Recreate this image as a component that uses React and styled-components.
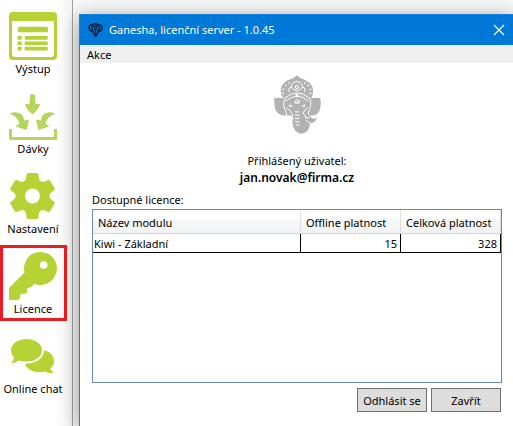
import React from "react";
import styled, { createGlobalStyle } from "styled-components";

const GREEN = "#b5d334";

const Global = createGlobalStyle`
  *, *::before, *::after { box-sizing: border-box; }
  body {
    margin: 0;
    overflow: hidden;
    background: #fff;
    color: #000;
    font-family: "Noto Sans", "Open Sans", sans-serif;
    font-size: 11px;
    line-height: 16px;
  }
  button { font: inherit; color: inherit; }
`;

const Page = styled.div`
  display: grid;
  grid-template-columns: 73px 1fr;
  min-height: 100vh;
`;

const Sidebar = styled.nav`
  display: flex;
  flex-direction: column;
  align-items: flex-start;
  gap: 4px;
  padding-top: 5px;
  border-right: 1px solid #a0a0a0;
  background: linear-gradient(90deg, #fff 75%, #f5f5f5);
`;

const NavButton = styled.button`
  display: flex;
  flex-direction: column;
  align-items: center;
  gap: 1px;
  width: 67px;
  height: 76px;
  padding: 4px 1px 0 0;
  border: 3px solid ${(p) => (p.$active ? "#ed1c24" : "transparent")};
  background: none;
  white-space: nowrap;

  svg { flex: none; display: block; }
`;

const Workspace = styled.main`
  display: flex;
  padding: 14px 0 0 6px;
  background: #f7f7f7;
`;

const Dialog = styled.section`
  flex: 1;
  display: flex;
  flex-direction: column;
  margin-right: -2px;
  border: 1px solid #1683d8;
  border-bottom: 0;
  background: #fff;
  box-shadow: 0 4px 18px rgba(0, 0, 0, 0.4);
`;

const TitleBar = styled.header`
  display: flex;
  align-items: center;
  gap: 6px;
  height: 30px;
  padding: 0 9px 0 8px;
  background: #0078d7;
  color: #fff;
`;

const Title = styled.h1`
  flex: 1;
  margin: 0;
  font-size: 11px;
  font-weight: 400;
  white-space: nowrap;
`;

const CloseButton = styled.button`
  display: flex;
  padding: 0;
  border: 0;
  background: none;
`;

const MenuBar = styled.div`
  display: flex;
  height: 18px;
  padding: 0 7px;
  background: #f0f0f0;
`;

const MenuItem = styled.button`
  padding: 0;
  border: 0;
  background: none;
  line-height: 20px;
`;

const Body = styled.div`
  flex: 1;
  display: flex;
  flex-direction: column;
  padding: 12px 12px 14px;
`;

const Account = styled.div`
  display: flex;
  flex-direction: column;
  align-items: center;

  svg { margin-bottom: 19px; }
`;

const Email = styled.strong`
  font-size: 12px;
  font-weight: 600;
  line-height: 18px;
`;

const ListLabel = styled.h2`
  margin: 5px 0 1px;
  font-size: 11px;
  font-weight: 400;
`;

const ListBox = styled.div`
  flex: 1;
  border: 1px solid #688caf;
`;

const Table = styled.table`
  width: 100%;
  table-layout: fixed;
  border-collapse: separate;
  border-spacing: 0;
`;

const HeadCell = styled.th`
  width: ${(p) => p.$width || "auto"};
  height: 24px;
  padding: 3px 0 0 5px;
  border-right: 1px solid #dedfe1;
  border-bottom: 1px solid #d5d5d5;
  background: linear-gradient(#fff 0 40%, #f7f8fa 41%, #f1f2f4);
  font-weight: 400;
  text-align: left;
  white-space: nowrap;
`;

const Cell = styled.td`
  height: 19px;
  padding: 1px 3px 0 1px;
  border-right: 1px solid #000;
  border-bottom: 1px solid #000;
  text-align: ${(p) => (p.$number ? "right" : "left")};
`;

const Actions = styled.footer`
  display: flex;
  justify-content: flex-end;
  gap: 4px;
  padding: 5px 1px 0 0;
`;

const ActionButton = styled.button`
  width: 70px;
  height: 24px;
  padding: 1px 0 0;
  border: 1px solid #707070;
  background: #ddd;
  white-space: nowrap;
`;

function OutputIcon() {
  return (
    <svg width="48" height="48" viewBox="0 0 48 48" fill={GREEN} aria-hidden="true">
      <path fillRule="evenodd" d="M4 0H44Q48 0 48 4V44Q48 48 44 48H4Q0 48 0 44V4Q0 0 4 0ZM3 9V42Q3 45 6 45H42Q45 45 45 42V9Z" />
      <rect x="9" y="14.700" width="30" height="5.600" rx="1.500" />
      {[24, 29.4, 34.8].map((y) => (
        <g key={y}>
          <rect x="8.500" y={y} width="4.200" height="3.700" rx=".6" />
          <rect x="15.700" y={y} width="23" height="3.700" rx=".6" />
        </g>
      ))}
    </svg>
  );
}

function BatchIcon() {
  const side = "M0.500 22C4 19.500 10 19.500 13 23Q15 25 15.300 28.500L20 27.500 17.700 38 6.500 34.500 10.500 31.500C9 27 6 23 .5 22Z";
  return (
    <svg width="48" height="48" viewBox="0 0 48 48" fill="#b5d55c" aria-hidden="true">
      <path d="M21 4Q21 2 23.500 2T26 4L26.500 12H31Q31 16 23.500 22.500Q16 16 16 12H20.500Z" />
      <path d={side} />
      <path d={side} transform="translate(47 0) scale(-1 1)" />
      <path d="M0 37H3V45H45V37H48V48H2Q0 48 0 46Z" />
    </svg>
  );
}

function GearIcon() {
  return (
    <svg width="48" height="48" viewBox="0 0 48 48" fill={GREEN} aria-hidden="true">
      <mask id="gear-hole">
        <path fill="#fff" d="M0 0H48V48H0Z" />
        <circle cx="23.500" cy="24" r="7.500" fill="#000" />
      </mask>
      <g mask="url(#gear-hole)">
        <circle cx="23.500" cy="24" r="17" />
        {[0, 60, 120, 180, 240, 300].map((a) => (
          <path key={a} transform={`rotate(${a} 23.500 24)`} d="M15 10Q17.500 8 17.500 2.500L18.500 1H28.500L29.500 2.500Q29.500 8 32 10L30 18H17Z" />
        ))}
      </g>
    </svg>
  );
}

function KeyIcon() {
  return (
    <svg width="48" height="48" viewBox="0 0 48 48" fill={GREEN} aria-hidden="true">
      <path fillRule="evenodd" d="M31.500 0A16.500 16.500 0 1 1 25 31.700Q23 35.800 18.500 36L17.500 41.500 11.500 42 11 46.500Q10 48 7 48H0V36L15.500 20.500Q14.200 16 16 11Q20 0 31.500 0ZM34.700 9.200A3.800 3.800 0 1 0 34.700 16.800A3.800 3.800 0 1 0 34.700 9.200Z" />
    </svg>
  );
}

function ChatIcon() {
  return (
    <svg width="48" height="48" viewBox="0 0 48 48" fill={GREEN} aria-hidden="true">
      <path d="M30 17.500C39 17.500 45 22.500 45 29Q45 33.500 41.500 36.500Q42 39 45 40.500Q40 42 36 39.500C27 42 20 38.500 16 33Z" />
      <path stroke="#fff" strokeWidth="4" paintOrder="stroke" d="M17.500 7C26.500 7 33 12 33 18.200S26.500 29.500 17.500 29.500Q13 29.500 9.500 28.500Q6 31.500 2 31Q4.500 29 4.800 25.500Q2 22 2 18.200C2 12 8.500 7 17.500 7Z" />
    </svg>
  );
}

function ElephantLogo() {
  return (
    <svg width="47" height="59" viewBox="42 28 142 178" fill="#b2b2b2" role="img" aria-label="Ganesha">
      <path d="M111 29Q120 39 134 42Q157 50 160 73Q161 87 154 98Q166 95 182 98Q185 119 180 134Q173 150 158 150L150 152Q160 165 172 157Q168 172 151 174Q148 205 125 205Q101 203 98 174L95 152Q90 148 76 150Q54 151 46 132Q42 114 42 98Q57 95 70 98Q61 85 63 70Q67 49 91 41Q103 38 111 29Z" />
      <g fill="none" stroke="#fff" strokeWidth="3" strokeLinecap="round">
        <path d="M75 99Q67 119 75 132Q79 139 80 150M150 99Q157 119 149 132Q145 140 146 148" />
        <path d="M74 98Q92 82 112 82T149 98M78 106Q95 92 112 92T145 106" />
        <path d="M88 79Q83 67 94 65Q96 49 111 47Q126 49 129 65Q140 68 134 79M94 65Q102 76 111 75T129 65" />
        <path d="M80 128Q91 133 97 145L99 165M144 126Q134 132 130 143Q138 151 139 158" />
        <path d="M139 157Q148 161 154 151M139 165Q146 172 151 173" />
        <path d="M107 139Q112 141 117 139M106 149Q112 151 118 149M106 159Q112 161 118 159M107 169Q112 171 118 169M109 179Q113 180 118 179" />
        <path d="M106 105V113H118V105M112 101V111" />
      </g>
      <g fill="#fff">
        <circle cx="111" cy="64" r="6" />
        <path d="M110 84L117 90 112 96 106 90ZM87 116L101 122 89 124ZM137 116L123 122 135 124Z" />
        {[[70, 83], [70, 71], [77, 59], [88, 52], [152, 83], [152, 71], [146, 59], [135, 52]].map(([x, y]) => (
          <circle key={`${x}-${y}`} cx={x} cy={y} r="2.600" />
        ))}
      </g>
      <circle cx="111" cy="64" r="3" />
    </svg>
  );
}

function TitleIcon() {
  return (
    <svg width="15" height="15" viewBox="0 0 15 15" fill="none" stroke="#06182c" strokeWidth="1.300" aria-hidden="true">
      <path d="M4 2Q7.500 0 11 2M4 2Q1 1.500 1 4.500T4.500 9M11 2Q14 1.500 14 4.500T10.500 9M4 2Q3 5 5 8L6 12Q7.500 14 9 12L10 8Q12 5 11 2M5 3.500H10M6 6H9M7.500 7V12" />
    </svg>
  );
}

const navItems = [
  { label: "Výstup", Icon: OutputIcon },
  { label: "Dávky", Icon: BatchIcon },
  { label: "Nastavení", Icon: GearIcon },
  { label: "Licence", Icon: KeyIcon, active: true },
  { label: "Online chat", Icon: ChatIcon },
];

const licences = [{ name: "Kiwi - Základní", offline: 15, total: 328 }];

export default function App() {
  return (
    <>
      <Global />
      <Page>
        <Sidebar>
          {navItems.map(({ label, Icon, active }) => (
            <NavButton key={label} type="button" $active={active} aria-current={active ? "page" : undefined}>
              <Icon />
              {label}
            </NavButton>
          ))}
        </Sidebar>
        <Workspace>
          <Dialog>
            <TitleBar>
              <TitleIcon />
              <Title>Ganesha, licenční server - 1.0.45</Title>
              <CloseButton type="button" aria-label="Zavřít okno">
                <svg width="12" height="12" viewBox="0 0 12 12" stroke="#fff" strokeWidth="1.200">
                  <path d="M1 1L11 11M11 1L1 11" />
                </svg>
              </CloseButton>
            </TitleBar>
            <MenuBar>
              <MenuItem type="button">Akce</MenuItem>
            </MenuBar>
            <Body>
              <Account>
                <ElephantLogo />
                <span>Přihlášený uživatel:</span>
                <Email>jan.novak@firma.cz</Email>
              </Account>
              <ListLabel id="licences-label">Dostupné licence:</ListLabel>
              <ListBox>
                <Table aria-labelledby="licences-label">
                  <thead>
                    <tr>
                      <HeadCell>Název modulu</HeadCell>
                      <HeadCell $width="100px">Offline platnost</HeadCell>
                      <HeadCell $width="100px">Celková platnost</HeadCell>
                    </tr>
                  </thead>
                  <tbody>
                    {licences.map((l) => (
                      <tr key={l.name}>
                        <Cell>{l.name}</Cell>
                        <Cell $number>{l.offline}</Cell>
                        <Cell $number>{l.total}</Cell>
                      </tr>
                    ))}
                  </tbody>
                </Table>
              </ListBox>
              <Actions>
                <ActionButton type="button">Odhlásit se</ActionButton>
                <ActionButton type="button">Zavřít</ActionButton>
              </Actions>
            </Body>
          </Dialog>
        </Workspace>
      </Page>
    </>
  );
}
